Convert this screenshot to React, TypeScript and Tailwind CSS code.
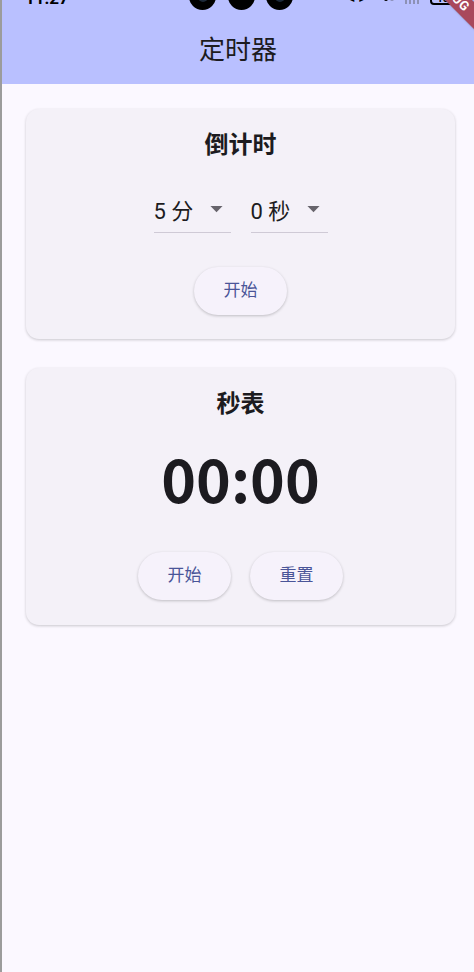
import React, { useState } from 'react';

const font = "font-['Roboto','Noto_Sans_CJK_SC',sans-serif]";

const Dropdown: React.FC<{ label: string }> = ({ label }) => (
  <div className="w-[77px] h-[48px] flex items-center justify-between border-b border-[#cfcad6]">
    <span className="text-[22px] leading-[28px] text-[#1c1b20] mt-[6px]">{label}</span>
    <svg width="29" height="29" viewBox="0 0 24 24">
      <path d="M7 10l5 5 5-5z" fill="#67646c" />
    </svg>
  </div>
);

const PillButton: React.FC<{ label: string; onClick?: () => void }> = ({ label, onClick }) => (
  <button
    onClick={onClick}
    className="w-[93px] h-[48px] rounded-full bg-[#f6f2fb] text-[#4a5598] text-[17px] shadow-[0_1px_3px_rgba(0,0,0,0.22)]"
  >
    {label}
  </button>
);

const App: React.FC = () => {
  const [seconds] = useState(0);
  const mm = String(Math.floor(seconds / 60)).padStart(2, '0');
  const ss = String(seconds % 60).padStart(2, '0');

  return (
    <div className={`relative w-[474px] h-[972px] overflow-hidden bg-[#fbf8ff] border-l-2 border-[#9c9c9c] ${font}`}>
      {/* app bar with clipped status bar */}
      <div className="relative h-[84px] bg-[#b9c0ff] flex items-center justify-center pt-[16px]">
        <h1 className="text-[26px] leading-[34px] text-[#1c1b20]">定时器</h1>

        {/* status bar remnants */}
        <span className="absolute left-[23px] top-[-14px] text-[17px] font-bold text-black">11:27</span>
        <div className="absolute left-[187px] top-[-17px] w-[27px] h-[27px] rounded-full bg-black flex items-center justify-center">
          <div className="w-[10px] h-[10px] rounded-full bg-[#1d2a3a]" />
        </div>
        <div className="absolute left-[226px] top-[-17px] w-[27px] h-[27px] rounded-full bg-black" />
        <div className="absolute left-[264px] top-[-17px] w-[27px] h-[27px] rounded-full bg-black flex items-center justify-center">
          <div className="w-[10px] h-[10px] rounded-full bg-[#1d2a3a]" />
        </div>
        <span className="absolute left-[346px] top-[-12px] text-[14px] font-bold text-black">&lt; &gt;</span>
        <div className="absolute left-[382px] top-[-3px] flex gap-[2px]">
          <div className="w-[4px] h-[4px] rounded-full bg-black" />
          <div className="w-[4px] h-[4px] rounded-full bg-[#8a8fb8]" />
        </div>
        <div className="absolute left-[403px] top-[-6px] flex gap-[2px]">
          <div className="w-[2px] h-[10px] bg-[#8d91b5]" />
          <div className="w-[2px] h-[10px] bg-[#8d91b5]" />
          <div className="w-[2px] h-[10px] bg-[#8d91b5]" />
          <div className="w-[2px] h-[10px] bg-[#8d91b5]" />
        </div>
        <div className="absolute left-[428px] top-[-8px] w-[31px] h-[13px] rounded-[4px] border-2 border-black flex items-center justify-center text-[10px] font-bold leading-none text-black">
          100
        </div>

        {/* debug banner */}
        <div className="absolute left-[380px] top-[-16px] w-[140px] h-[19px] bg-[#a9485c] rotate-45 flex items-center justify-center shadow-[0_0_2px_rgba(0,0,0,0.3)]">
          <span className="text-[13px] font-bold leading-none text-white tracking-[0.5px]">DEBUG</span>
        </div>
      </div>

      <div className="flex flex-col gap-[29px] pt-[25px] pl-[24px] pr-[19px]">
        {/* countdown */}
        <div className="rounded-[13px] bg-[#f4f1f8] shadow-[0_1px_3px_rgba(0,0,0,0.2)] pt-[20px] pb-[24px] flex flex-col items-center">
          <h2 className="text-[24px] leading-[32px] font-bold text-[#1c1b20]">倒计时</h2>
          <div className="mt-[24px] flex gap-[20px]">
            <Dropdown label="5 分" />
            <Dropdown label="0 秒" />
          </div>
          <div className="mt-[34px]">
            <PillButton label="开始" />
          </div>
        </div>

        {/* stopwatch */}
        <div className="rounded-[13px] bg-[#f4f1f8] shadow-[0_1px_3px_rgba(0,0,0,0.2)] pt-[20px] pb-[25px] flex flex-col items-center">
          <h2 className="text-[24px] leading-[32px] font-bold text-[#1c1b20]">秒表</h2>
          <div className="mt-[19px] h-[76px] flex items-center font-['Noto_Sans_CJK_SC',sans-serif] text-[59px] leading-none font-bold text-[#1c1b20]">
            {mm}:{ss}
          </div>
          <div className="mt-[37px] flex gap-[19px]">
            <PillButton label="开始" />
            <PillButton label="重置" />
          </div>
        </div>
      </div>
    </div>
  );
};

export default App;
